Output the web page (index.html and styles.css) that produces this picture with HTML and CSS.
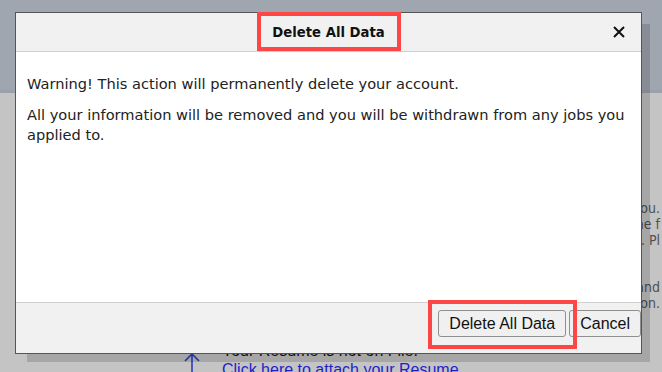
FILE: index.html
```html
<!DOCTYPE html>
<html lang="en">
<head>
    <meta charset="UTF-8" />
    <meta name="viewport" content="width=device-width, initial-scale=1.0" />
    <title>Delete All Data</title>
    <link rel="stylesheet" href="styles.css">
</head>
<body>
    <!-- Page behind the modal (dimmed) -->
    <div class="page">
        <div class="page-top"></div>
        <div class="page-main">
            <div class="side-text">
                <div>and thank you.</div>
                <div>within the f</div>
                <div>as below. Pl</div>
                <div class="gap">and</div>
                <div>section.</div>
            </div>
            <div class="resume-note">
                <svg class="arrow" width="16" height="30" viewBox="0 0 16 30">
                    <path d="M8 2 V30 M1 9 L8 2 L15 9" fill="none" stroke="#2b3fb5" stroke-width="1.6"/>
                </svg>
                <div>
                    <div class="note-text">Your Resume is not on File.</div>
                    <a class="note-link" href="#">Click here to attach your Resume</a>
                </div>
            </div>
        </div>
    </div>

    <!-- Modal -->
    <div class="dialog">
        <div class="dialog-header">
            <span class="dialog-title marked">Delete All Data</span>
            <button class="close-btn" aria-label="Close">
                <svg width="12" height="12" viewBox="0 0 12 12">
                    <path d="M1 1 L11 11 M11 1 L1 11" stroke="#111" stroke-width="2"/>
                </svg>
            </button>
        </div>
        <div class="dialog-body">
            <p>Warning! This action will permanently delete your account.</p>
            <p>All your information will be removed and you will be withdrawn from any jobs you applied to.</p>
        </div>
        <div class="dialog-footer">
            <span class="marked marked-btn"><button class="btn">Delete All Data</button></span>
            <button class="btn">Cancel</button>
        </div>
    </div>
</body>
</html>
```

FILE: styles.css
```css
body {
    margin: 0;
    width: 662px;
    height: 372px;
    overflow: hidden;
    position: relative;
    background: #c4c4c4;
    font-family: "DejaVu Sans Condensed", "DejaVu Sans", sans-serif;
    font-stretch: condensed;
}

/* background page */
.page-top {
    height: 90px;
    background: #a0a6af;
    border-bottom: 3px solid #9ba1a9;
}

.page-main {
    padding-top: 107px;
}

.side-text {
    font-size: 14px;
    line-height: 16px;
    color: #505050;
    text-align: right;
    white-space: nowrap;
    padding-right: 2px;
}

.side-text .gap {
    margin-top: 31px;
}

.resume-note {
    display: flex;
    align-items: flex-start;
    gap: 22px;
    margin-top: 31px;
    padding-left: 184px;
}

.arrow {
    margin-top: 10px;
}

.note-text {
    font-family: "Liberation Sans", Arial, sans-serif;
    font-size: 16px;
    line-height: 18px;
    color: #111;
}

.note-link {
    font-family: "Liberation Sans", Arial, sans-serif;
    font-size: 16px;
    line-height: 18px;
    color: #1f1fc8;
    text-decoration: underline;
}

/* modal */
.dialog {
    position: absolute;
    left: 15px;
    top: 12px;
    width: 625px;
    border: 1px solid #555;
    background: #fff;
    box-shadow: 10px 10px 0 -2px rgba(0, 0, 0, 0.15);
}

.dialog-header {
    height: 38px;
    background: #f1f1f1;
    border-bottom: 1px solid #cfcfcf;
    display: flex;
    justify-content: center;
    position: relative;
}

.dialog-title {
    font-size: 14.7px;
    font-weight: bold;
    line-height: 38px;
    color: #111;
}

.close-btn {
    position: absolute;
    right: 16px;
    top: 13px;
    padding: 0;
    border: none;
    background: none;
    line-height: 0;
}

.dialog-body {
    height: 228px;
    padding: 22px 6px 0 11px;
    font-family: "DejaVu Sans", sans-serif;
    font-stretch: normal;
    font-size: 14.6px;
    line-height: 20px;
    color: #222;
}

.dialog-body p {
    margin: 0 0 11px;
}

.dialog-footer {
    height: 43px;
    padding-top: 7px;
    background: #f1f1f1;
    border-top: 1px solid #cfcfcf;
    display: flex;
    justify-content: flex-end;
    align-items: flex-start;
    gap: 3px;
}

.btn {
    height: 27px;
    padding: 0 10px;
    font-family: "Liberation Sans", Arial, sans-serif;
    font-size: 16px;
    color: #111;
    background: #f0f0f0;
    border: 1px solid #8f8f8f;
    border-radius: 3px;
}

/* red annotation boxes */
.marked {
    position: relative;
}

.marked::after {
    content: "";
    position: absolute;
    border: 4px solid #fd4646;
    pointer-events: none;
}

.dialog-title::after {
    top: -1px;
    bottom: 0;
    left: -15px;
    right: -16px;
}

.marked-btn {
    display: flex;
}

.marked-btn::after {
    top: -10px;
    bottom: -12px;
    left: -10px;
    right: -11px;
}
```
